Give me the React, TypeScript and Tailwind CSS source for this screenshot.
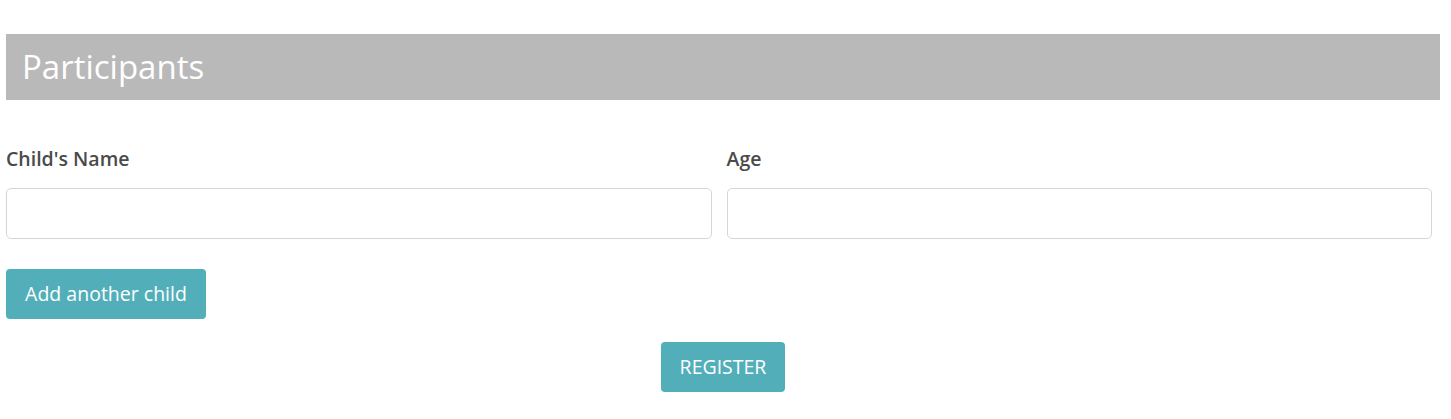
import React from 'react';

export default function App() {
  return (
    <div className="min-h-screen bg-white pt-[34px] pl-[6px] pr-[11px]" style={{ fontFamily: '"Open Sans", sans-serif' }}>
      <div className="h-[66px] bg-[#b9b9b9] flex items-center pl-[16px]">
        <h2 className="text-[33px] text-white leading-none pb-[2px]">Participants</h2>
      </div>
      <div className="pr-[8px] mt-[46px] grid grid-cols-2 gap-x-[15px]">
        <div>
          <label className="block text-[19.5px] font-semibold text-[#4a4a4a] leading-[26px] mb-[16px]">Child's Name</label>
          <input type="text" className="w-full h-[51px] border border-[#cfd9db] rounded-[5px] outline-none px-3" />
        </div>
        <div>
          <label className="block text-[19.5px] font-semibold text-[#4a4a4a] leading-[26px] mb-[16px]">Age</label>
          <input type="text" className="w-full h-[51px] border border-[#cfd9db] rounded-[5px] outline-none px-3" />
        </div>
      </div>
      <button className="mt-[30px] h-[50px] w-[200px] rounded-[4px] bg-[#52afb9] text-white text-[19.5px]">
        Add another child
      </button>
      <div className="flex justify-center mt-[23px]">
        <button className="h-[50px] w-[124px] rounded-[4px] bg-[#52afb9] text-white text-[19.5px]">
          REGISTER
        </button>
      </div>
    </div>
  );
}
